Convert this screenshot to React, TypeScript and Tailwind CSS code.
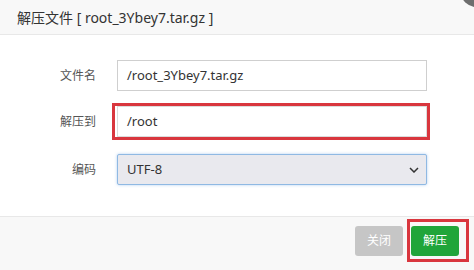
import React from "react";

export default function App() {
  const font = { fontFamily: '"Noto Sans", "Noto Sans CJK SC", sans-serif' };
  return (
    <div className="relative w-[474px] h-[270px] overflow-hidden bg-white" style={font}>
      {/* header */}
      <div className="h-[35px] bg-[#f8f8f8] border-b border-[#e8e8e8] flex items-center pl-[17px] text-[14px] text-[#333]">
        解压文件 [ root_3Ybey7.tar.gz ]
      </div>
      <div className="absolute left-[461px] top-[-23px] w-[30px] h-[30px] rounded-full bg-[#6e6e6e]" />

      {/* body */}
      <div className="h-[181px] pt-[25px]">
        <div className="flex items-center h-[31px]">
          <div className="w-[97px] pr-[1px] text-right text-[12px] text-[#555]">文件名</div>
          <div className="ml-[20px] w-[310px] h-[31px] border border-[#cfcfcf] flex items-center pl-[9px] text-[13px] text-[#333]">
            /root_3Ybey7.tar.gz
          </div>
        </div>
        <div className="flex items-center h-[31px] mt-[15px]">
          <div className="w-[97px] pr-[1px] text-right text-[12px] text-[#555]">解压到</div>
          <div className="relative ml-[20px] w-[310px] h-[31px] border border-[#dcdcdc] flex items-center pl-[9px] text-[13px] text-[#333]">
            /root
            <div className="absolute left-[-6px] top-[-4px] w-[318px] h-[37px] border-[3px] border-[#d9363e]" />
          </div>
        </div>
        <div className="flex items-center h-[31px] mt-[17px]">
          <div className="w-[97px] pr-[1px] text-right text-[12px] text-[#555]">编码</div>
          <div className="ml-[20px] w-[310px] h-[31px] border border-[#8fb9e3] bg-[#e9e9ee] rounded-[2px] shadow-[0_0_3px_rgba(100,160,230,0.5)] flex items-center justify-between pl-[9px] pr-[7px] text-[13px] text-[#333]">
            <span>UTF-8</span>
            <svg width="10" height="6" viewBox="0 0 10 6" fill="none">
              <path d="M1 1l4 4 4-4" stroke="#333" strokeWidth="1.5" />
            </svg>
          </div>
        </div>
      </div>

      {/* footer */}
      <div className="h-[54px] bg-[#f8f8f8] border-t border-[#e8e8e8] flex justify-end pt-[9px] pr-[15px] gap-[8px]">
        <div className="w-[48px] h-[30px] rounded-[3px] bg-[#c6c6c6] text-white text-[12px] flex items-center justify-center">
          关闭
        </div>
        <div className="relative w-[48px] h-[30px] rounded-[3px] bg-[#20a53a] text-white text-[12px] flex items-center justify-center">
          解压
          <div className="absolute left-[-4px] top-[-7px] w-[62px] h-[43px] border-[3px] border-[#d9363e]" />
        </div>
      </div>
    </div>
  );
}
